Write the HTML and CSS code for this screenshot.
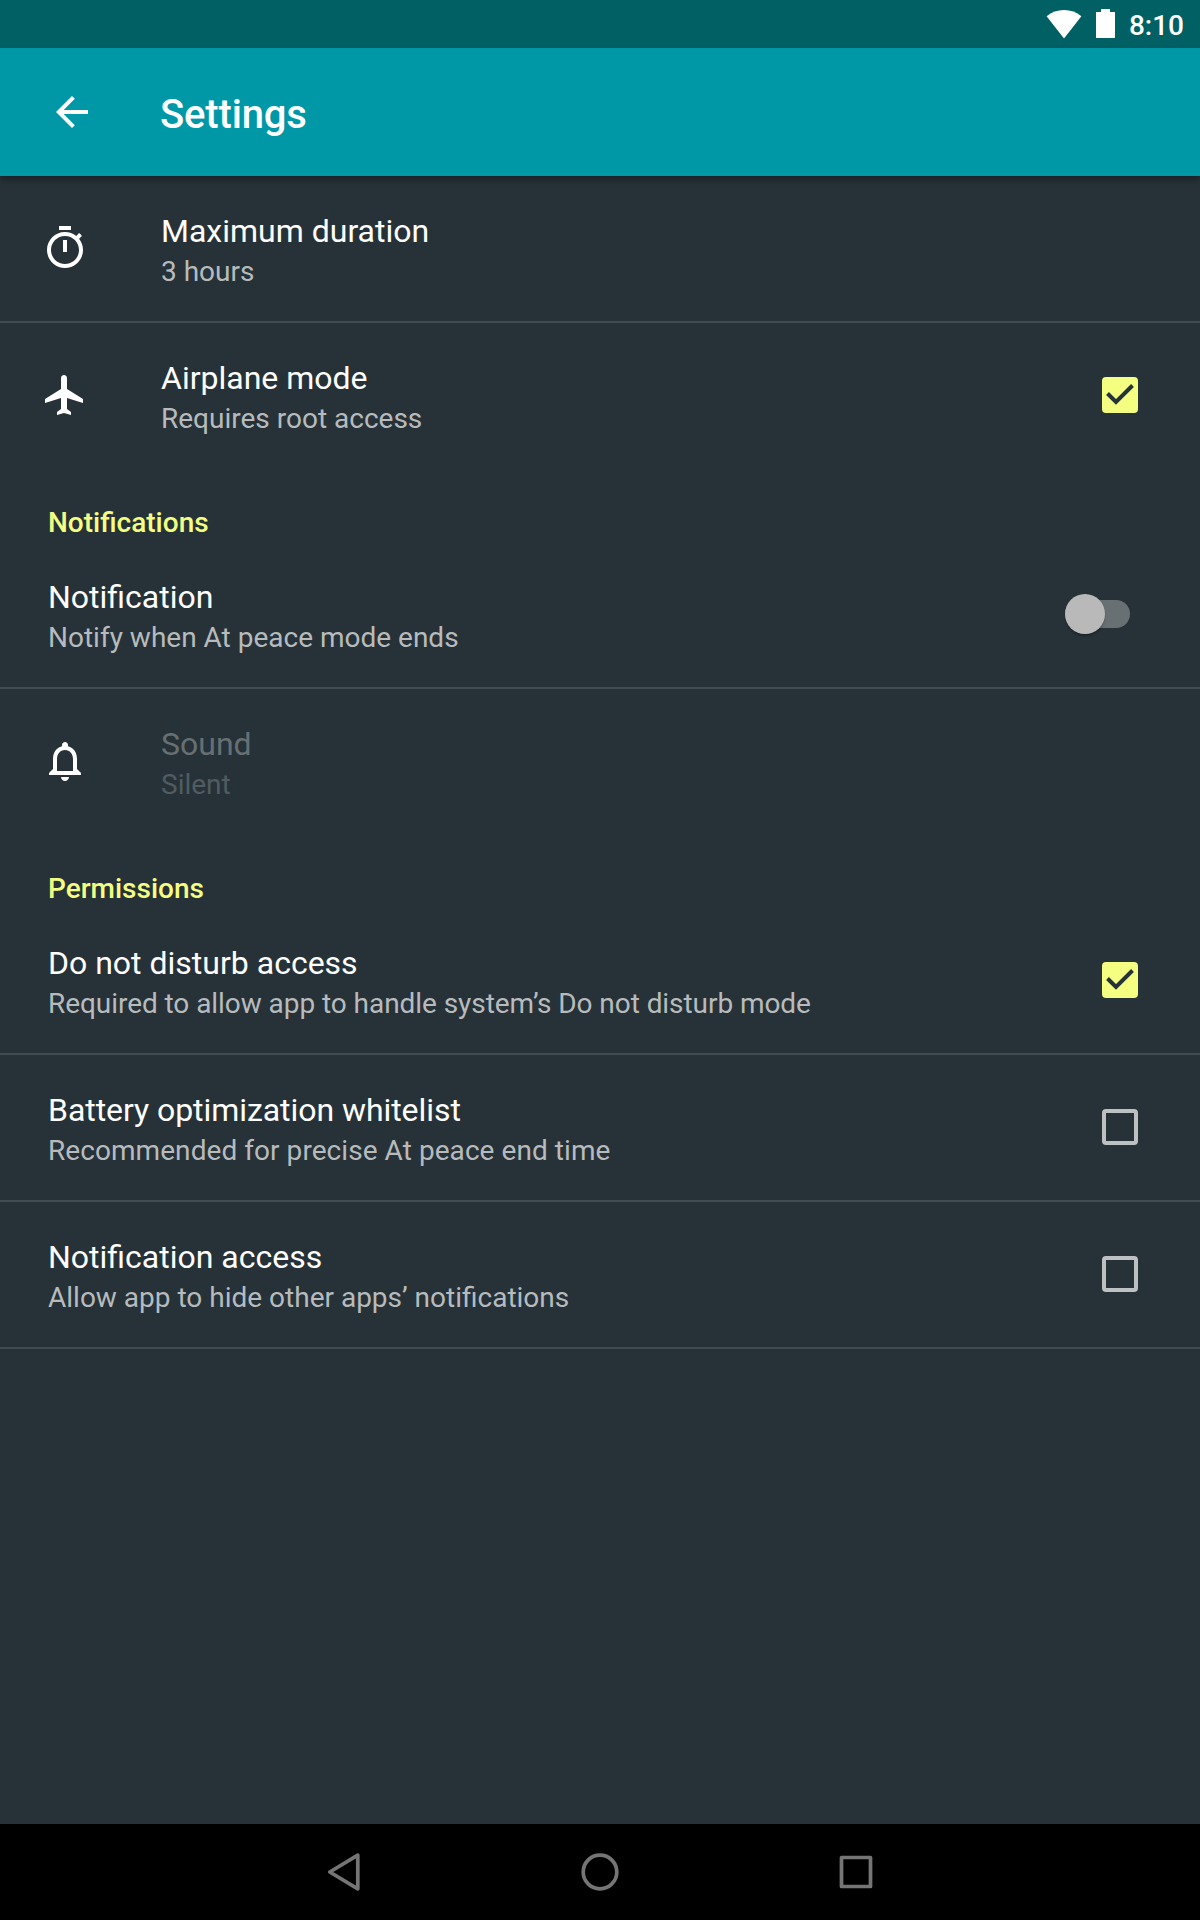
FILE: index.html
```html
<!DOCTYPE html>
<html lang="en">
<head>
<meta charset="utf-8">
<title>Settings</title>
<link rel="stylesheet" href="styles.css">
</head>
<body>
<div class="screen">
  <div class="status-bar">
    <svg class="wifi" width="36" height="30" viewBox="0 0 36 30"><path d="M18 29.500.6 7.300C5.600 3 11.500 1 18 1s12.400 2 17.400 6.300z"/></svg>
    <svg class="battery" width="20" height="30" viewBox="0 0 20 30"><path d="M5 0h9v3h5v26H0V3h5z"/></svg>
    <span class="clock">8:10</span>
  </div>
  <header class="toolbar">
    <svg class="icon" viewBox="0 0 24 24"><path d="M20 11H7.830l5.590-5.590L12 4l-8 8 8 8 1.410-1.410L7.830 13H20v-2z"/></svg>
    <h1 class="toolbar-title">Settings</h1>
  </header>
  <main class="content">
    <section class="row divided with-icon">
      <svg class="icon" viewBox="0 0 24 24"><path d="M15 1H9v2h6V1zm-4 13h2V8h-2v6zm8.030-6.610 1.420-1.420c-.43-.51-.9-.99-1.410-1.410l-1.420 1.420C16.070 4.740 14.120 4 12 4c-4.970 0-9 4.030-9 9s4.020 9 9 9 9-4.030 9-9c0-2.120-.74-4.070-1.970-5.610zM12 20c-3.870 0-7-3.130-7-7s3.130-7 7-7 7 3.130 7 7-3.130 7-7 7z"/></svg>
      <div class="text"><div class="title">Maximum duration</div><div class="summary">3 hours</div></div>
    </section>
    <section class="row with-icon">
      <svg class="icon" viewBox="0 0 24 24"><path d="M21 16v-2l-8-5V3.500c0-.83-.67-1.500-1.500-1.500S10 2.670 10 3.500V9l-8 5v2l8-2.500V19l-2 1.500V22l3.500-1 3.500 1v-1.500L13 19v-5.500l8 2.500z"/></svg>
      <div class="text"><div class="title">Airplane mode</div><div class="summary">Requires root access</div></div>
      <div class="checkbox checked"><svg viewBox="0 0 36 36"><path d="M5.500 16.500 14 25 30.500 8.500"/></svg></div>
    </section>
    <h2 class="category">Notifications</h2>
    <section class="row divided">
      <div class="text"><div class="title">Notification</div><div class="summary">Notify when At peace mode ends</div></div>
      <div class="switch"><div class="thumb"></div></div>
    </section>
    <section class="row with-icon disabled">
      <svg class="icon" viewBox="0 0 24 24"><path d="M12 22c1.100 0 2-.9 2-2h-4c0 1.100.9 2 2 2zm6-6v-5c0-3.070-1.630-5.640-4.500-6.320V4c0-.83-.67-1.500-1.500-1.500s-1.500.67-1.500 1.500v.68C7.640 5.360 6 7.920 6 11v5l-2 2v1h16v-1l-2-2zm-2 1H8v-6c0-2.480 1.510-4.500 4-4.500s4 2.020 4 4.500v6z"/></svg>
      <div class="text"><div class="title">Sound</div><div class="summary">Silent</div></div>
    </section>
    <h2 class="category">Permissions</h2>
    <section class="row divided">
      <div class="text"><div class="title">Do not disturb access</div><div class="summary tight">Required to allow app to handle system’s Do not disturb mode</div></div>
      <div class="checkbox checked"><svg viewBox="0 0 36 36"><path d="M5.500 16.500 14 25 30.500 8.500"/></svg></div>
    </section>
    <section class="row divided">
      <div class="text"><div class="title tight">Battery optimization whitelist</div><div class="summary loose">Recommended for precise At peace end time</div></div>
      <div class="checkbox"></div>
    </section>
    <section class="row divided">
      <div class="text"><div class="title">Notification access</div><div class="summary">Allow app to hide other apps’ notifications</div></div>
      <div class="checkbox"></div>
    </section>
  </main>
  <nav class="nav-bar">
    <svg viewBox="0 0 48 48"><path d="M37.800 7.200v33.600L9.800 24z"/></svg>
    <svg viewBox="0 0 48 48"><circle cx="24" cy="24" r="16.800"/></svg>
    <svg viewBox="0 0 48 48"><rect x="9.500" y="9.500" width="29" height="29"/></svg>
  </nav>
</div>
</body>
</html>
```
FILE: styles.css
```css
* { box-sizing: border-box; }
body { margin: 0; background: #263238; font-family: Roboto, sans-serif; color: #fff; }
.screen { width: 1200px; height: 1920px; display: flex; flex-direction: column; background: #263238; }
.status-bar { height: 48px; background: #006064; display: flex; justify-content: flex-end; align-items: flex-start; padding: 9px 16px 0 0; fill: #fff; }
.battery { margin: 0 13px 0 14px; }
.clock { font-size: 28px; font-weight: 500; line-height: 33px; }
.toolbar { height: 128px; background: #0097a7; display: flex; align-items: center; padding-left: 48px; box-shadow: 0 4px 6px rgba(0, 0, 0, .3); }
.icon { width: 48px; height: 48px; fill: #fff; flex: none; }
.toolbar-title { margin: 6px 0 0 64px; font-size: 40px; font-weight: 500; line-height: 48px; letter-spacing: -.15px; }
.content { flex: 1; }
.row { height: 145px; display: flex; align-items: center; padding: 0 62px 1px 48px; }
.row.with-icon { padding-left: 41px; }
.row.divided { height: 147px; border-bottom: 2px solid #414b51; }
.row.with-icon .text { margin-left: 72px; }
.text { flex: 1; padding-top: 4px; }
.title { font-size: 32px; line-height: 43px; }
.summary { font-size: 28px; line-height: 38px; color: #b7bbbd; }
.tight { letter-spacing: -.06px; }
.loose { letter-spacing: .06px; }
.disabled .title { color: #676f73; }
.disabled .summary { color: #515b60; }
.category { margin: 0; height: 74px; padding: 38px 48px 0; font-size: 28px; font-weight: 500; line-height: 33px; color: #f4ff81; font-variant-ligatures: common-ligatures; }
.tight, .loose { font-feature-settings: "liga"; }
.checkbox { width: 36px; height: 36px; border: 4px solid #bec1c3; border-radius: 4px; }
.checkbox.checked { border: 0; background: #f4ff81; }
.checkbox svg { display: block; fill: none; stroke: #263238; stroke-width: 4; }
.switch { width: 65px; height: 28px; margin-right: 8px; border-radius: 14px; background: #687073; display: flex; align-items: center; }
.thumb { width: 40px; height: 40px; flex: none; border-radius: 50%; background: #b9b9b9; box-shadow: 0 2px 2px rgba(0, 0, 0, .25); }
.nav-bar { height: 96px; background: #000; display: flex; justify-content: center; align-items: center; gap: 208px; }
.nav-bar svg { width: 48px; height: 48px; fill: none; stroke: #757575; stroke-width: 3.7; stroke-linejoin: round; }
```
